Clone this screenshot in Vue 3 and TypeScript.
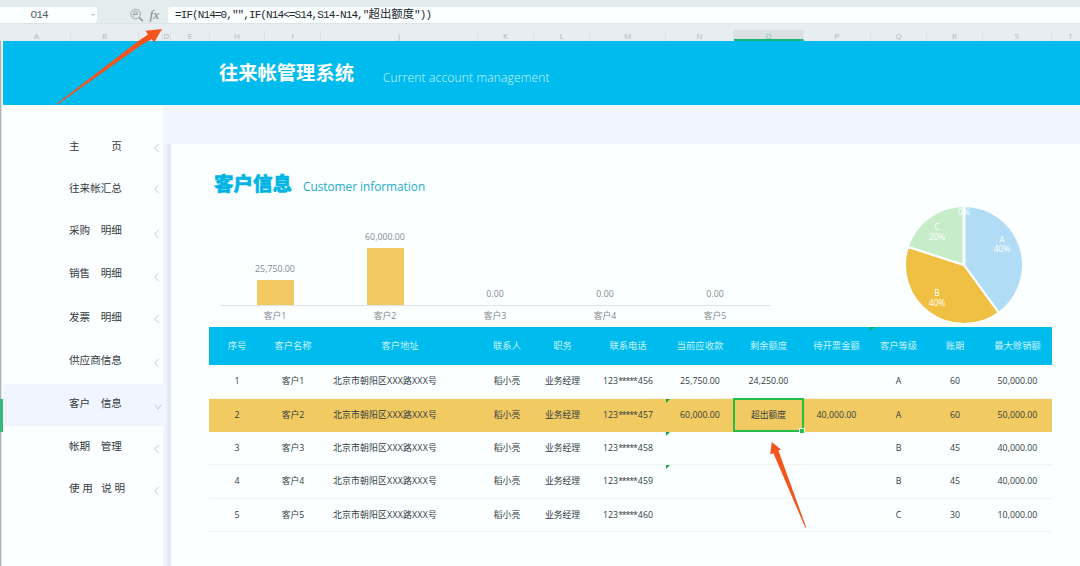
<script setup lang="ts">
interface Column { letter: string; width: number }
interface NavItem { label: string; drop: number; active?: boolean }
interface Customer { cells: string[]; selected?: boolean; marks?: number[] }

const columns: Column[] = [
  { letter: 'A', width: 68 }, { letter: 'B', width: 68 }, { letter: '', width: 24 },
  { letter: 'D', width: 8 }, { letter: 'E', width: 39 }, { letter: 'H', width: 55 },
  { letter: 'I', width: 56 }, { letter: 'J', width: 157 }, { letter: 'K', width: 56 },
  { letter: 'L', width: 56 }, { letter: 'M', width: 76 }, { letter: 'N', width: 68 },
  { letter: 'O', width: 70 }, { letter: 'P', width: 67 }, { letter: 'Q', width: 56 },
  { letter: 'R', width: 56 }, { letter: 'S', width: 69 }, { letter: 'T', width: 38 },
]

const nav: NavItem[] = [
  { label: '主　　　页', drop: 3 },
  { label: '往来帐汇总', drop: 2 },
  { label: '采购　明细', drop: 4 },
  { label: '销售　明细', drop: 4 },
  { label: '发票　明细', drop: 3 },
  { label: '供应商信息', drop: 4 },
  { label: '客户　信息', drop: 4, active: true },
  { label: '帐期　管理', drop: 3 },
  { label: '使 用   说 明', drop: 4 },
]

const heads = ['序号', '客户名称', '客户地址', '联系人', '职务', '联系电话', '当前应收款', '剩余额度', '待开票金额', '客户等级', '账期', '最大赊销额']
const address = '北京市朝阳区XXX路XXX号'
const rows: Customer[] = [
  { cells: ['1', '客户1', address, '稻小亮', '业务经理', '123*****456', '25,750.00', '24,250.00', '', 'A', '60', '50,000.00'] },
  { cells: ['2', '客户2', address, '稻小亮', '业务经理', '123*****457', '60,000.00', '超出额度', '40,000.00', 'A', '60', '50,000.00'], selected: true, marks: [6] },
  { cells: ['3', '客户3', address, '稻小亮', '业务经理', '123*****458', '', '', '', 'B', '45', '40,000.00'], marks: [6] },
  { cells: ['4', '客户4', address, '稻小亮', '业务经理', '123*****459', '', '', '', 'B', '45', '40,000.00'], marks: [6] },
  { cells: ['5', '客户5', address, '稻小亮', '业务经理', '123*****460', '', '', '', 'C', '30', '10,000.00'] },
]
// Splits a masked phone number so its asterisks can be set tighter.
const parts = (cell: string): string[] => cell.split(/(\*+)/)

const bars = [
  { name: '客户1', value: '25,750.00', height: 25 },
  { name: '客户2', value: '60,000.00', height: 57 },
  { name: '客户3', value: '0.00', height: 0 },
  { name: '客户4', value: '0.00', height: 0 },
  { name: '客户5', value: '0.00', height: 0 },
]

const R = 59
function slice(from: number, to: number): string {
  const p = (d: number) => {
    const a = (d * Math.PI) / 180
    return `${(R * Math.sin(a)).toFixed(2)} ${(-R * Math.cos(a)).toFixed(2)}`
  }
  return `M0 0L${p(from)}A${R} ${R} 0 0 1 ${p(to)}Z`
}
const slices = [
  { d: slice(0, 144), fill: '#b0dcf6' },
  { d: slice(144, 288), fill: '#efc043' },
  { d: slice(288, 360), fill: '#c6edc8' },
]
const pieLabels = [
  { x: 0, y: -50, t: '0%' },
  { x: -27, y: -35, t: 'C' }, { x: -27, y: -25, t: '20%' },
  { x: 38, y: -22, t: 'A' }, { x: 38, y: -13, t: '40%' },
  { x: -27, y: 31, t: 'B' }, { x: -27, y: 41, t: '40%' },
]
</script>

<template>
  <div class="sheet">
    <div class="formula-row">
      <div class="name-box"><span>O14</span><i></i></div>
      <svg class="tools" width="71" height="16" viewBox="0 0 71 16">
        <g fill="none" stroke="#959da0" stroke-width=".9">
          <circle cx="38.6" cy="7" r="4.8" />
          <path d="M42.2 10.6l3.6 3.4" stroke-width="1.8" />
          <path d="M36.8 9.6V4.6h3.2v2.6h-3.2M36.8 7.2h4.4" stroke-width=".8" />
        </g>
        <text x="52.5" y="11.6" class="fx">fx</text>
      </svg>
      <div class="formula">=IF(N14=0,"",IF(N14&lt;=S14,S14-N14,"<b>超出额度</b>"))</div>
    </div>
    <div class="col-heads">
      <span v-for="(c, i) in columns" :key="i" :class="{ current: c.letter === 'O' }" :style="{ width: c.width + 'px' }">{{ c.letter }}</span>
    </div>
    <header class="banner">
      <h1>往来帐管理系统</h1>
      <p>Current account management</p>
    </header>
    <div class="body">
      <nav class="side">
        <div v-for="n in nav" :key="n.label" class="nav-item" :class="{ active: n.active }">
          <span>{{ n.label }}</span>
          <svg width="8" height="10" viewBox="0 0 8 10" :style="{ marginTop: n.drop * 2 + 'px' }">
            <path :d="n.active ? 'M1 2.8L4 7L7 2.8' : 'M5.8 .8L1.8 5L5.8 9.2'" fill="none" stroke="#bcc4cb" stroke-width=".9" />
          </svg>
        </div>
      </nav>
      <div class="gutter"></div>
      <main class="content">
        <div class="title">
          <h2>客户信息</h2>
          <p>Customer information</p>
        </div>
        <div class="charts">
          <div class="bar-chart">
            <div class="plot">
              <div v-for="b in bars" :key="b.name" class="bar">
                <span>{{ b.value }}</span>
                <div :style="{ height: b.height + 'px' }"></div>
              </div>
            </div>
            <div class="axis"><span v-for="b in bars" :key="b.name">{{ b.name }}</span></div>
          </div>
          <svg class="pie" width="122" height="122" viewBox="-61 -61 122 122">
            <path v-for="s in slices" :key="s.fill" :d="s.d" :fill="s.fill" stroke="#fbffff" stroke-width="2" />
            <path d="M0 0V-59" stroke="#fbffff" stroke-width="3" />
            <text v-for="(l, i) in pieLabels" :key="i" :x="l.x" :y="l.y">{{ l.t }}</text>
          </svg>
        </div>
        <div class="table">
          <div class="tr th">
            <span v-for="(h, i) in heads" :key="h">{{ h }}<i v-if="i === 9" class="mark"></i></span>
          </div>
          <div v-for="r in rows" :key="r.cells[0]" class="tr" :class="{ selected: r.selected }">
            <span v-for="(c, i) in r.cells" :key="i" :class="{ address: i === 2, picked: r.selected && i === 7 }"><em v-for="(p, k) in parts(c)" :key="k" :class="{ stars: p.startsWith('*') }">{{ p }}</em><i v-if="r.marks?.includes(i)" class="mark"></i></span>
          </div>
        </div>
      </main>
    </div>
    <div class="edge"><i></i></div>
    <svg class="arrows" width="1080" height="566" viewBox="0 0 1080 566">
      <g fill="#f4551f">
        <path d="M162 29L145.5 30.8L148 34.4L138 41.3L57 103.4L57.6 104.6L141 45.3L151.5 39.3L154.3 42.2Z" />
        <path d="M771.7 442L770.2 454.5L773.4 453.2L805.2 527.6L806.2 527.2L778.4 450.6L781 449.5Z" />
      </g>
    </svg>
  </div>
</template>

<style>
body { margin: 0; overflow: hidden; }
</style>

<style scoped>
.sheet {
  position: relative;
  width: 1080px;
  height: 566px;
  overflow: hidden;
  background: #fbffff;
  color: #333b40;
  font-family: "Open Sans", "Noto Sans CJK SC", sans-serif;
}
h1, h2, p { margin: 0; }
em { font-style: normal; }
.formula-row {
  display: flex;
  height: 16px;
  padding-top: 7px;
  background: #e4eded;
  border-bottom: 1px solid #dde4e5;
}
.name-box {
  display: flex;
  align-items: center;
  justify-content: space-between;
  box-sizing: border-box;
  width: 97px;
  padding: 0 2px 0 30.5px;
  border-radius: 0 3px 3px 0;
  background: #fbffff;
  color: #555d60;
  font: 11px/17px "Liberation Mono", monospace;
  letter-spacing: -.8px;
}
.name-box i {
  border: 2px solid transparent;
  border-top: 2.5px solid #b4bcbf;
  border-bottom: 0;
}
.tools { width: 71px; flex: none; }
.fx { font: italic 13.5px "Liberation Serif", serif; fill: #7c8588; }
.formula {
  flex: 1;
  padding-left: 7px;
  border-radius: 3px 0 0 3px;
  background: #fbffff;
  color: #23282b;
  font: 11px/17px "Liberation Mono", "Noto Sans CJK SC", monospace;
  letter-spacing: -.91px;
  white-space: pre;
}
.formula b { font-weight: 400; font-size: 11.4px; letter-spacing: 0; font-family: "Noto Sans CJK SC", sans-serif; line-height: 1; }
.col-heads {
  display: flex;
  height: 17px;
  padding-left: 3px;
  background: #e7edf0;
}
.col-heads span {
  flex: none;
  box-sizing: border-box;
  margin-top: 6px;
  height: 11px;
  border-right: 1px solid #dce2e5;
  color: #b0b8bd;
  font-size: 8px;
  line-height: 11px;
  text-align: center;
}
.col-heads .current { background: #dae0e3; color: #6ec596; border-bottom: 2px solid #18b573; }
.banner {
  display: flex;
  height: 64px;
  margin-left: 3px;
  padding: 1px 0 0 216px;
  box-sizing: content-box;
  background: #00bbee;
  color: #fff;
}
.banner h1 { width: 164px; font-size: 19.3px; line-height: 61px; font-weight: 700; white-space: nowrap; }
.banner p { font-size: 12px; line-height: 71px; font-weight: 300; letter-spacing: .17px; color: #d5f5ff; white-space: nowrap; }
.body { display: flex; height: 461px; margin-top: -1px; background: #f1f5ff; }
.side {
  display: grid;
  grid-template-rows: 42px 42px 43px 43px 44px 45px 42px 41px 42px;
  align-content: start;
  box-sizing: border-box;
  width: 163px;
  padding: 20px 0 0 3px;
  background: #fbffff;
}
.nav-item {
  display: flex;
  align-items: center;
  justify-content: space-between;
  padding: 0 2px 2px 66px;
  font-size: 10.6px;
  white-space: pre;
}
.nav-item:nth-child(6) { padding-bottom: 5px; }
.nav-item.active { padding-bottom: 5px; background: #f1f5ff; }
.nav-item.active svg { margin-right: -1px; }
.gutter { width: 5px; margin: 39px 0 0 3px; background: linear-gradient(90deg, #eceff8, #e1e5ed); }
.content { flex: 1; margin-top: 39px; padding-left: 38px; background: #fbffff; }
.title { display: flex; height: 61px; padding-left: 5px; color: #00b5e6; }
.title h2 { width: 89px; font-size: 19.5px; line-height: 80px; font-weight: 900; -webkit-text-stroke: .5px #00b5e6; white-space: nowrap; }
.title p { font-size: 11.8px; line-height: 84px; white-space: nowrap; color: #22acd0; }
.charts { display: flex; height: 122px; }
.bar-chart { width: 550px; margin-left: 11px; color: #858b8d; font-size: 8.8px; }
.plot { display: flex; height: 100px; border-bottom: 1px solid #dfe3e4; }
.bar { flex: 1; display: flex; flex-direction: column; align-items: center; justify-content: flex-end; }
.bar span { line-height: 12px; margin-bottom: 5px; }
.bar div { width: 37px; background: #f2ca61; }
.axis { display: flex; line-height: 20px; }
.axis span { flex: 1; text-align: center; }
.pie { margin: -1px 0 0 133px; flex: none; }
.pie text { fill: #fff; font-size: 8.5px; text-anchor: middle; }
.table { width: 843px; }
.tr {
  display: grid;
  grid-template-columns: 56px 56px 158px 56px 55px 76px 68px 69px 67px 57px 56px 69px;
  box-sizing: border-box;
  height: 33.2px;
  border-bottom: 1px solid #eff3f4;
  font-size: 8.8px;
  line-height: 32px;
  text-align: center;
  white-space: nowrap;
}
.tr:nth-child(2) { height: 34px; }
.tr span { position: relative; }
.th { height: 38px; line-height: 37px; font-size: 9.3px; background: #00bbee; border: 0; color: #c5f3fd; }
.selected { background: #f1cb62; border-color: #f1cb62; }
.tr .address { text-align: left; padding-left: 12px; letter-spacing: .22px; }
.stars { letter-spacing: -1.1px; margin-right: 1px; }
.picked { outline: 2px solid #25bd49; outline-offset: -1px; }
.picked::after {
  content: "";
  position: absolute;
  right: -2px;
  bottom: -3px;
  width: 4px;
  height: 4px;
  background: #25bd49;
  border: 1px solid #fbffff;
}
.mark {
  position: absolute;
  left: 0;
  top: 0;
  border-top: 4px solid #15a546;
  border-right: 4px solid transparent;
}
.edge {
  position: absolute;
  left: 0;
  top: 41px;
  bottom: 0;
  width: 2px;
  background: linear-gradient(90deg, #adb4b7 50%, #dfe5e7 50%);
}
.edge i { position: absolute; left: 0; top: 358px; width: 3px; height: 33px; background: #39b978; }
.arrows { position: absolute; left: 0; top: 0; pointer-events: none; }
</style>
